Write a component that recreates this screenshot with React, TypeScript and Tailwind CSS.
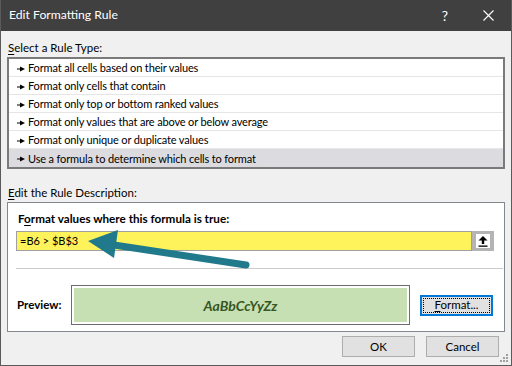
import React from "react";

const rules = [
  "Format all cells based on their values",
  "Format only cells that contain",
  "Format only top or bottom ranked values",
  "Format only values that are above or below average",
  "Format only unique or duplicate values",
  "Use a formula to determine which cells to format",
];

function RuleGlyph() {
  return (
    <svg width="8" height="6" viewBox="0 0 8 6" className="shrink-0">
      <rect x="0" y="2.5" width="4" height="1" fill="#000" />
      <polygon points="3,0.5 8,3 3,5.5" fill="#000" />
    </svg>
  );
}

function CollapseIcon() {
  return (
    <svg width="10" height="11" viewBox="0 0 10 11">
      <polygon points="5,0 9.5,4.5 0.5,4.5" fill="#000" />
      <rect x="3.8" y="4" width="2.4" height="4" fill="#000" />
      <rect x="0.5" y="9.5" width="9" height="1.3" fill="#000" />
    </svg>
  );
}

function Button({ children, focused }: { children: React.ReactNode; focused?: boolean }) {
  return (
    <div
      className={
        focused
          ? "w-[73px] h-[21px] border-2 border-[#0078d7] bg-[#e1e1e1] p-px"
          : "w-[73px] h-[21px] border border-[#adadad] bg-[#e1e1e1] flex items-center justify-center"
      }
    >
      {focused ? (
        <div className="w-full h-full border border-dotted border-black flex items-center justify-center">
          {children}
        </div>
      ) : (
        children
      )}
    </div>
  );
}

export default function App() {
  return (
    <div className="relative w-[512px] h-[366px] bg-[#f0f0f0] border-x border-b border-[#5b5b5b] flex flex-col font-['Lato',sans-serif] text-[11.5px] text-black overflow-hidden">
      <div className="h-[31px] shrink-0 bg-[#404040] flex items-center pl-[8px] text-white text-[12.2px]">
        <span className="flex-1">Edit Formatting Rule</span>
        <span className="text-[14px] mr-[35px]">?</span>
        <svg width="11" height="11" viewBox="0 0 11 11" className="mr-[17px]">
          <path d="M0.5 0.5 L10.5 10.5 M10.5 0.5 L0.5 10.5" stroke="#fff" strokeWidth="1.1" />
        </svg>
      </div>

      <div className="flex flex-col px-[6px]">
        <div className="mt-[9px] h-4 leading-4 pl-px">
          <span className="underline underline-offset-2">S</span>elect a Rule Type:
        </div>
        <div className="mt-px h-[112px] border-2 border-[#7a7a7a] bg-white text-[11px] tracking-[-0.15px]">
          {rules.map((r, i) => (
            <div
              key={r}
              className={
                i === rules.length - 1
                  ? "h-[18px] flex items-center gap-[3px] pl-[8px] pt-[2px] bg-[#dcdce0]"
                  : "h-[18px] flex items-center gap-[3px] pl-[8px] pt-[2px] border-b border-[#e6e6e6]"
              }
            >
              <RuleGlyph />
              <span>{r}</span>
            </div>
          ))}
        </div>

        <div className="mt-[16px] h-4 leading-4 pl-px">
          <span className="underline underline-offset-2">E</span>dit the Rule Description:
        </div>
        <div className="mt-px h-[130px] border border-[#828790] bg-white flex flex-col">
          <div className="mt-[7px] h-4 leading-4 ml-[10px] font-bold text-[11.7px]">
            F<span className="underline underline-offset-2">o</span>rmat values where this formula is true:
          </div>
          <div className="mt-[5px] ml-[8px] flex">
            <div className="w-[456px] h-[20px] border border-[#a0a0a0] bg-[#fff35c] flex items-center pl-[3px] text-[11px]">
              =B6 &gt; $B$3
            </div>
            <div className="w-[22px] h-[20px] border-x-4 border-y-[3px] border-[#b4b4b4] bg-white flex items-center justify-center">
              <CollapseIcon />
            </div>
          </div>
          <div className="mt-[17px] ml-[8px] mr-px h-px bg-[#cbcbcb]" />
          <div className="mt-[16px] flex items-center">
            <div className="ml-[9px] w-[54px] font-bold">Preview:</div>
            <div className="w-[339px] h-[40px] border border-[#6d6d6d] bg-white p-[2px]">
              <div className="w-full h-full bg-[#c6e0b4] flex items-center justify-center font-bold italic text-[14px] text-[#375623]">
                AaBbCcYyZz
              </div>
            </div>
            <div className="ml-[10px]">
              <Button focused>
                <span>
                  <span className="underline underline-offset-2">F</span>ormat...
                </span>
              </Button>
            </div>
          </div>
        </div>

        <div className="mt-[4px] mr-[6px] flex justify-end gap-[11px]">
          <Button>OK</Button>
          <Button>Cancel</Button>
        </div>
      </div>

      <svg width="512" height="366" className="absolute left-0 top-0 pointer-events-none">
        <line x1="113" y1="245" x2="245" y2="265" stroke="#217a8b" strokeWidth="7" strokeLinecap="round" />
        <polygon points="87,241 117,230 113,258" fill="#217a8b" />
      </svg>

      <svg width="10" height="10" viewBox="0 0 10 10" className="absolute right-[2px] bottom-[2px]">
        <rect x="7" y="1" width="2" height="2" fill="#a0a0a0" />
        <rect x="4" y="4" width="2" height="2" fill="#a0a0a0" />
        <rect x="7" y="4" width="2" height="2" fill="#a0a0a0" />
        <rect x="1" y="7" width="2" height="2" fill="#a0a0a0" />
        <rect x="4" y="7" width="2" height="2" fill="#a0a0a0" />
        <rect x="7" y="7" width="2" height="2" fill="#a0a0a0" />
      </svg>
    </div>
  );
}
